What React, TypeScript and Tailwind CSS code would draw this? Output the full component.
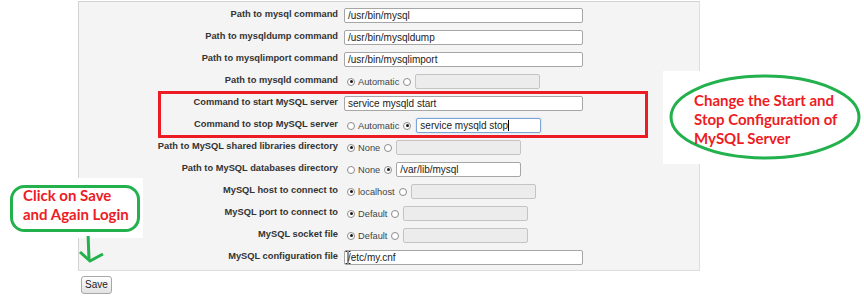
import React from 'react';

type Row =
    | { label: string; kind: 'text'; value: string; caret?: boolean; ibeam?: boolean }
    | { label: string; kind: 'choice'; option: string; first: boolean; value?: string; focused?: boolean };

const rows: Row[] = [
    { label: 'Path to mysql command', kind: 'text', value: '/usr/bin/mysql' },
    { label: 'Path to mysqldump command', kind: 'text', value: '/usr/bin/mysqldump' },
    { label: 'Path to mysqlimport command', kind: 'text', value: '/usr/bin/mysqlimport' },
    { label: 'Path to mysqld command', kind: 'choice', option: 'Automatic', first: true },
    { label: 'Command to start MySQL server', kind: 'text', value: 'service mysqld start' },
    { label: 'Command to stop MySQL server', kind: 'choice', option: 'Automatic', first: false, value: 'service mysqld stop', focused: true },
    { label: 'Path to MySQL shared libraries directory', kind: 'choice', option: 'None', first: true },
    { label: 'Path to MySQL databases directory', kind: 'choice', option: 'None', first: false, value: '/var/lib/mysql' },
    { label: 'MySQL host to connect to', kind: 'choice', option: 'localhost', first: true },
    { label: 'MySQL port to connect to', kind: 'choice', option: 'Default', first: true },
    { label: 'MySQL socket file', kind: 'choice', option: 'Default', first: true },
    { label: 'MySQL configuration file', kind: 'text', value: '/etc/my.cnf', ibeam: true },
];

function Radio({ checked }: { checked: boolean }) {
    return (
        <span className="inline-flex w-[8px] h-[8px] shrink-0 rounded-full border border-[#8c8c8c] bg-white items-center justify-center">
            {checked && <span className="w-[3px] h-[3px] rounded-full bg-[#1a1a1a]" />}
        </span>
    );
}

function Field({ row }: { row: Row }) {
    if (row.kind === 'text') {
        return (
            <div className="relative flex items-center w-[239px] h-[15px] bg-white border border-[#a6a6a6] rounded-[2px] pl-[3px] text-[10px] text-[#222]">
                {row.value}
                {row.ibeam && (
                    <svg className="absolute left-[0px] top-[0px]" width="6" height="13" viewBox="0 0 6 13">
                        <path d="M0.5 0.5h2M3.5 0.5h2M3 1v11M0.5 12.5h2M3.5 12.5h2" stroke="#222" strokeWidth="1" fill="none" />
                    </svg>
                )}
            </div>
        );
    }
    return (
        <div className="flex items-center h-[15px]">
            <span className="ml-[3px] flex"><Radio checked={row.first} /></span>
            <span className="ml-[3px] text-[9.3px] text-[#444] translate-y-[1px]">{row.option}</span>
            <span className="ml-[4px] flex"><Radio checked={!row.first} /></span>
            {row.value !== undefined ? (
                <div
                    className={
                        row.focused
                            ? 'ml-[5px] flex items-center w-[125px] h-[15px] bg-white border border-[#7ea4d6] rounded-[2px] pl-[3px] text-[10px] text-[#222] shadow-[0_0_2px_#b5cdee]'
                            : 'ml-[4px] flex items-center w-[125px] h-[15px] bg-white border border-[#a6a6a6] rounded-[2px] pl-[3px] text-[10px] text-[#222]'
                    }
                >
                    {row.value}
                    {row.focused && <span className="w-[1px] h-[11px] bg-black" />}
                </div>
            ) : (
                <div className="ml-[4px] w-[125px] h-[15px] bg-[#ececec] border border-[#c4c4c4] rounded-[2px]" />
            )}
        </div>
    );
}

export default function App() {
    return (
        <div className="relative w-[864px] h-[300px] bg-white overflow-hidden font-['Liberation_Sans',Arial,sans-serif]">
            <div className="pl-[78px] pt-[1px]">
                <div className="w-[622px] h-[270px] bg-[#f4f4f4] border border-[#d2d2d2] border-r-[#dedede] border-b-[#dedede] pt-[6px]">
                    <div className="grid grid-cols-[259px_1fr] gap-x-[6px] gap-y-[7px]">
                        {rows.map((row) => (
                            <React.Fragment key={row.label}>
                                <div className="h-[15px] flex items-center justify-end text-[9.3px] font-bold text-[#333] -translate-y-[1px] whitespace-nowrap">
                                    {row.label}
                                </div>
                                <Field row={row} />
                            </React.Fragment>
                        ))}
                    </div>
                </div>
                <button className="mt-[5px] ml-[3px] w-[31px] h-[18px] rounded-[3px] border border-[#a8a8a8] bg-gradient-to-b from-white to-[#e2e2e2] text-[10px] text-[#222] leading-none">
                    Save
                </button>
            </div>

            {/* red highlight round the start/stop rows */}
            <div className="absolute left-[158px] top-[91px] w-[490px] h-[47px] border-[3px] border-[#ED1C24]" />

            {/* right note */}
            <div className="absolute left-[663px] top-[71px] w-[201px] h-[93px] bg-white">
                <svg className="absolute left-0 top-0" width="201" height="93" viewBox="0 0 201 93">
                    <ellipse cx="102" cy="46" rx="94" ry="41" fill="none" stroke="#22B14C" strokeWidth="3" />
                </svg>
                <div className="absolute left-[31px] top-[20px] font-['Lato',sans-serif] font-bold text-[15px] leading-[19px] text-[#ED1C24] whitespace-nowrap">
                    Change the Start and<br />Stop Configuration of<br />MySQL Server
                </div>
            </div>

            {/* left note */}
            <div className="absolute left-0 top-[178px] w-[143px] h-[60px] bg-white">
                <svg className="absolute left-0 top-0" width="143" height="60" viewBox="0 0 143 60">
                    <rect x="11.5" y="8.5" width="127" height="44" rx="13" fill="none" stroke="#22B14C" strokeWidth="3" />
                </svg>
                <div className="absolute left-[23px] top-[8px] font-['Lato',sans-serif] font-bold text-[15px] leading-[19px] text-[#ED1C24] whitespace-nowrap">
                    Click on Save<br />and Again Login
                </div>
            </div>
            <svg className="absolute left-[76px] top-[236px]" width="30" height="30" viewBox="0 0 30 30">
                <path d="M12 -3L13 24" stroke="#22B14C" strokeWidth="3" fill="none" />
                <path d="M4 16L14 25L27 18" stroke="#22B14C" strokeWidth="3" fill="none" />
            </svg>
        </div>
    );
}
